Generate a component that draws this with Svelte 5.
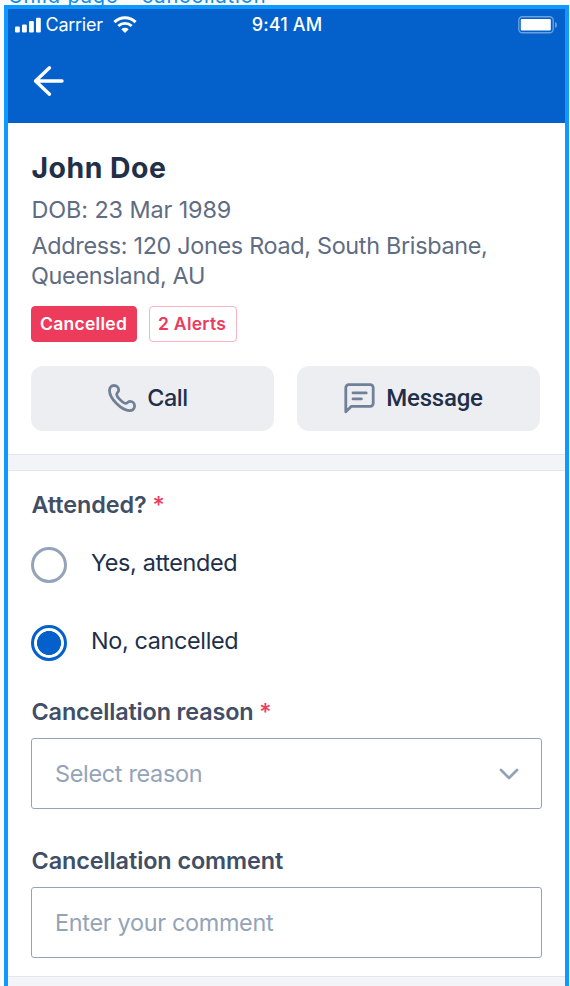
<script lang="ts">
  let attended = $state("no");
  let comment = $state("");

  const options = [
    { value: "yes", label: "Yes, attended" },
    { value: "no", label: "No, cancelled" },
  ];
</script>

<div class="canvas">
  <div class="frame-label">Child page - cancellation</div>

  <main class="frame">
    <header>
      <div class="status-bar">
        <div class="carrier">
          <svg width="26" height="16" viewBox="0 0 26 16" fill="#fff">
            <rect x="0" y="9.5" width="4.8" height="6" rx="1.2" />
            <rect x="7" y="7.4" width="4.8" height="8.1" rx="1.2" />
            <rect x="14" y="4" width="4.8" height="11.5" rx="1.2" />
            <rect x="21" y="0.7" width="4.8" height="14.8" rx="1.2" />
          </svg>
          <span>Carrier</span>
          <svg class="wifi" width="24" height="18" viewBox="0 0 24 18" fill="none" stroke="#fff">
            <path d="M1.4 6.1a15.3 15.3 0 0 1 21.2 0" stroke-width="3" />
            <path d="M5.3 10.1a9.7 9.7 0 0 1 13.4 0" stroke-width="2.8" />
            <path d="M8.3 13.2a5.4 5.4 0 0 1 7.4 0L12 17z" fill="#fff" stroke="none" />
          </svg>
        </div>
        <span class="time">9:41 AM</span>
        <svg class="battery" width="40" height="18" viewBox="0 0 40 18">
          <rect x="0.8" y="0.8" width="34.4" height="16" rx="3.5" fill="none" stroke="#fff" stroke-opacity="0.4" stroke-width="1.4" />
          <rect x="2.8" y="3" width="30" height="11.6" rx="1" fill="#fff" />
          <path d="M37 6c2.7 1 2.7 5 0 6z" fill="#fff" fill-opacity="0.4" />
        </svg>
      </div>
      <button class="back" aria-label="Back">
        <svg width="32" height="32" viewBox="0 0 32 32" fill="none" stroke="#fff" stroke-width="3.4" stroke-linecap="round" stroke-linejoin="round">
          <path d="M29 16H2.5M16.5 2.8L2.5 16l14 13.2" />
        </svg>
      </button>
    </header>

    <section class="profile">
      <h1>John Doe</h1>
      <p class="dob">DOB: 23 Mar 1989</p>
      <p class="address">Address: 120 Jones Road, South Brisbane,<br />Queensland, AU</p>
      <div class="badges">
        <span class="badge cancelled">Cancelled</span>
        <span class="badge alerts">2 Alerts</span>
      </div>
      <div class="actions">
        <button class="call">
          <svg width="28" height="28" viewBox="0 0 28 28" fill="none" stroke="#718096" stroke-width="2.8" stroke-linejoin="round">
            <path d="M1.5 6.5C1.5 3.5 3.3 1.5 6 1.5c2.6 0 4.7 2 4.7 4.5 0 2.2-2 2.6-2 4.4 0 2.6 6.5 9 9 9 1.8 0 2.2-2 4.4-2 2.5 0 4.5 2.1 4.5 4.7 0 2.7-2 4.5-5 4.5C13.5 26.6 1.5 14.6 1.5 6.5z" />
          </svg>
          <span>Call</span>
        </button>
        <button class="message">
          <svg width="31" height="31" viewBox="0 0 31 31" fill="none" stroke="#718096" stroke-width="2.8" stroke-linecap="round" stroke-linejoin="round">
            <path d="M1.8 28.7V4.7a3 3 0 0 1 3-3h21.4a3 3 0 0 1 3 3v15.6a3 3 0 0 1-3 3H7.4z" />
            <path d="M9 9.9h13.2M9 15.9h8.4" />
          </svg>
          <span>Message</span>
        </button>
      </div>
    </section>

    <div class="divider"></div>

    <section class="form">
      <h2>Attended? <em>*</em></h2>
      {#each options as option}
        <label class="option">
          <input type="radio" name="attended" value={option.value} bind:group={attended} />
          <span class="radio"></span>
          <span class="option-text">{option.label}</span>
        </label>
      {/each}

      <h2 class="reason">Cancellation reason <em>*</em></h2>
      <button class="field">
        <span>Select reason</span>
        <svg width="20" height="12" viewBox="0 0 20 12" fill="none" stroke="#94a3b8" stroke-width="2.7" stroke-linecap="round" stroke-linejoin="round">
          <path d="M2 2l8 8 8-8" />
        </svg>
      </button>

      <h2 class="comment">Cancellation comment</h2>
      <input class="field text" placeholder="Enter your comment" bind:value={comment} />
    </section>

    <div class="divider"></div>
  </main>
</div>

<style>
  :global(body) {
    margin: 0;
    overflow: hidden;
    background: #fafafa;
  }

  .canvas {
    height: 986px;
    overflow: hidden;
    font-family: Inter, sans-serif;
    font-size: 23.4px;
  }

  .frame-label {
    display: flex;
    align-items: flex-end;
    height: 5px;
    padding-left: 8px;
    color: #0d8fee;
    font-size: 20px;
    letter-spacing: 0.9px;
    line-height: 18px;
    white-space: nowrap;
  }

  .frame {
    box-sizing: border-box;
    width: 565.5px;
    height: 1000px;
    margin-left: 3.5px;
    border: 4px solid #0d99ff;
    background: #fff;
  }

  header {
    box-sizing: border-box;
    height: 114px;
    background: #0461cc;
    color: #fff;
  }

  .status-bar {
    display: grid;
    grid-template-columns: 1fr auto 1fr;
    align-items: center;
    height: 31px;
    padding: 0 7.5px 0 7px;
    font-size: 18px;
  }

  .carrier {
    display: flex;
    align-items: center;
    gap: 5px;
    letter-spacing: -0.25px;
  }

  .wifi {
    margin-left: 5px;
  }

  .time {
    padding-left: 2px;
    font-weight: 500;
    letter-spacing: 0.15px;
  }

  .battery {
    justify-self: end;
  }

  button {
    padding: 0;
    border: 0;
    background: none;
    font: inherit;
    cursor: pointer;
  }

  svg {
    display: block;
    flex: none;
  }

  .back {
    display: block;
    margin: 25px 0 0 25px;
  }

  .profile {
    box-sizing: border-box;
    height: 330.5px;
    padding: 27px 24px 0 23.5px;
  }

  h1,
  h2,
  p {
    margin: 0;
    text-indent: 0.5px;
    white-space: nowrap;
  }

  h1 {
    color: #212f49;
    font-size: 28.4px;
    font-weight: 700;
    letter-spacing: 0.5px;
    line-height: 36px;
  }

  p {
    color: #606c82;
    line-height: 30px;
  }

  .dob {
    margin-top: 9px;
    letter-spacing: -0.1px;
  }

  .address {
    margin-top: 5.5px;
    letter-spacing: -0.32px;
  }

  .badges {
    display: flex;
    gap: 12px;
    margin-top: 15.5px;
  }

  .badge {
    box-sizing: border-box;
    height: 36px;
    border: 1.5px solid #ed3b5c;
    border-radius: 4px;
    padding: 0 8px;
    font-size: 17.5px;
    font-weight: 600;
    letter-spacing: 0.28px;
    line-height: 34px;
    white-space: nowrap;
  }

  .cancelled {
    width: 106px;
    background: #ed3b5c;
    color: #fff;
  }

  .alerts {
    width: 88px;
    border-color: #f9b4c1;
    color: #ed3b5c;
  }

  .actions {
    display: grid;
    grid-template-columns: 243px 243px;
    gap: 23px;
    margin-top: 23.5px;
  }

  .actions button {
    display: flex;
    align-items: center;
    justify-content: center;
    height: 65.5px;
    border-radius: 12px;
    background: #edeef2;
    color: #212f49;
    font-weight: 500;
  }

  .call {
    gap: 11px;
    padding-right: 9px;
    letter-spacing: -0.4px;
  }

  .call span {
    margin-top: -2px;
  }

  .message {
    gap: 11px;
    padding-right: 10px;
  }

  .message span {
    font-family: Roboto, sans-serif;
    font-size: 24px;
    letter-spacing: -0.2px;
  }

  .divider {
    box-sizing: border-box;
    height: 17.5px;
    border: solid #e2e6ef;
    border-width: 1.5px 0;
    background: #f2f4f8;
  }

  .form {
    box-sizing: border-box;
    height: 504.5px;
    padding: 19px 23px 0 23.5px;
  }

  h2 {
    color: #414e65;
    font-size: 23.4px;
    font-weight: 600;
    letter-spacing: -0.08px;
    line-height: 30px;
  }

  em {
    color: #ed3b5c;
    font-style: normal;
    font-weight: 500;
  }

  .option {
    display: flex;
    align-items: center;
    height: 36px;
    margin-top: 27px;
    color: #212f49;
    letter-spacing: -0.35px;
    white-space: nowrap;
  }

  .option + .option {
    margin-top: 41.5px;
  }

  .option input {
    position: absolute;
    opacity: 0;
  }

  .option-text {
    margin-top: -4.5px;
  }

  .radio {
    box-sizing: border-box;
    width: 36px;
    height: 36px;
    margin-right: 24px;
    border: 3px solid #94a3b8;
    border-radius: 50%;
  }

  input:checked + .radio {
    border-color: #0461cc;
    background: radial-gradient(circle, #0461cc 11.7px, #fff 12.3px);
  }

  .reason {
    margin-top: 36px;
    letter-spacing: -0.14px;
  }

  .field {
    box-sizing: border-box;
    display: flex;
    align-items: center;
    justify-content: space-between;
    width: 511px;
    height: 71px;
    margin-top: 11px;
    border: 1.5px solid #94a3b8;
    border-radius: 3px;
    padding: 1px 22px 0 23px;
    background: #fff;
    color: #94a3b8;
    letter-spacing: -0.3px;
  }

  .comment {
    margin-top: 37px;
  }

  .text {
    font: inherit;
  }

  .text::placeholder {
    color: #94a3b8;
    opacity: 1;
  }
</style>
